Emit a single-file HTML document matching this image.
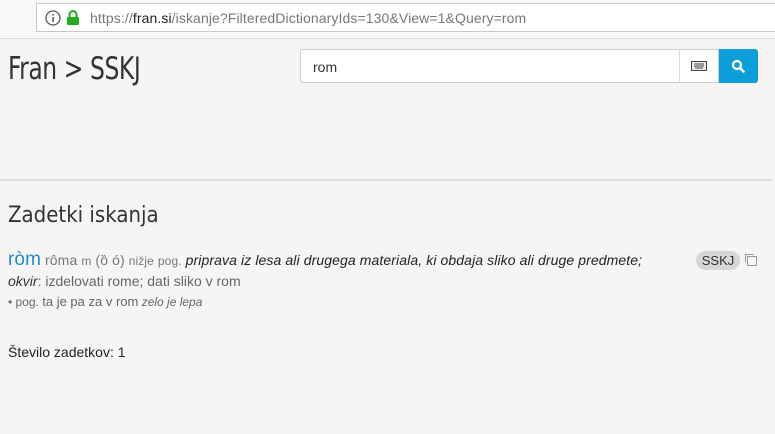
<!DOCTYPE html>
<html><head><meta charset="utf-8"><style>
body{margin:0;width:775px;height:434px;overflow:hidden;background:#f6f5f3;font-family:"Liberation Sans",sans-serif;position:relative}
.bar{position:absolute;left:0;top:0;width:775px;height:38px;background:#f9f9f9;border-bottom:1px solid #ddd}
.url{position:absolute;left:36px;top:3px;width:760px;height:29px;background:#fff;border:1px solid #c8c8c8;box-sizing:border-box}
.url span.t{position:absolute;left:53px;top:6px;font-size:14px;color:#777;letter-spacing:.1px}
.abs{position:absolute}
</style></head><body>
<div class="bar"><div class="url">
<svg class="abs" style="left:8px;top:6px" width="16" height="16"><circle cx="8" cy="8" r="7" fill="none" stroke="#555" stroke-width="1.3"/><rect x="7.3" y="7" width="1.5" height="5" fill="#555"/><rect x="7.3" y="4" width="1.5" height="1.6" fill="#555"/></svg>
<svg class="abs" style="left:29px;top:5px" width="14" height="17"><path d="M3.5 8V5.5a3.5 3.5 0 0 1 7 0V8" fill="none" stroke="#1fae1f" stroke-width="2"/><rect x="1" y="8" width="12" height="8" rx="1" fill="#1fae1f"/></svg>
<span class="t">https://<span style="color:#222">fran.si</span>/iskanje?FilteredDictionaryIds=130&amp;View=1&amp;Query=rom</span>
</div></div>
<div class="abs" style="left:8px;top:51px;font-size:31px;color:#333;font-family:'DejaVu Sans Condensed',sans-serif;font-weight:200;letter-spacing:-.5px;transform:scaleX(0.84);transform-origin:left top;white-space:nowrap">Fran &gt; SSKJ</div>
<div class="abs" style="left:300px;top:49px;width:380px;height:34px;background:#fff;border:1px solid #ccc;box-sizing:border-box;border-radius:3px 0 0 3px"><span class="abs" style="left:12px;top:9px;font-size:14px;color:#333">rom</span></div>
<div class="abs" style="left:679px;top:49px;width:40px;height:34px;background:#fff;border:1px solid #ccc;border-left:1px solid #ddd;box-sizing:border-box"><svg class="abs" style="left:11px;top:11px" width="16" height="10"><rect x=".5" y=".5" width="15" height="9" fill="#eee" stroke="#444"/><path d="M3 3h10M3 5h10M4 7h8" stroke="#444"/></svg></div>
<div class="abs" style="left:719px;top:49px;width:39px;height:34px;background:#0c9ed8;border-radius:0 3px 3px 0"><svg class="abs" style="left:12px;top:10px" width="14" height="14"><circle cx="6" cy="6" r="4" fill="none" stroke="#fff" stroke-width="2.2"/><path d="M9 9l3.5 3.5" stroke="#fff" stroke-width="2.6" stroke-linecap="round"/></svg></div>
<div class="abs" style="left:0;top:179px;width:772px;height:2px;background:#ddd"></div>
<div class="abs" style="left:8px;top:203px;font-size:22px;color:#333;font-family:'DejaVu Sans Condensed',sans-serif;font-weight:200">Zadetki iskanja</div>
<div class="abs" style="left:8px;top:249px;font-size:14px;color:#222;white-space:nowrap;letter-spacing:.1px"><span style="color:#1d8dc9;font-size:19px">ròm</span> <span style="color:#777">rôma <span style="font-size:12px">m</span> (ȍ ó) <span style="font-size:12px">nižje</span> <span style="font-size:12px">pog.</span></span> <i>priprava iz lesa ali drugega materiala, ki obdaja sliko ali druge predmete;</i></div>
<div class="abs" style="left:8px;top:273px;font-size:14px;color:#666"><i style="color:#333">okvir</i>: izdelovati rome; dati sliko v rom</div>
<div class="abs" style="left:8px;top:294px;font-size:12px;color:#666">• pog. <span style="font-size:13px">ta je pa za v rom</span> <i>zelo je lepa</i></div>
<div class="abs" style="left:8px;top:344px;font-size:14px;color:#222">Število zadetkov: 1</div>
<div class="abs" style="left:696px;top:251px;width:44px;height:19px;border-radius:10px;background:#d6d6d6;font-size:13px;color:#333;text-align:center;line-height:19px">SSKJ</div>
<svg class="abs" style="left:743px;top:252px" width="15" height="15"><rect x="4.5" y="4.5" width="9" height="9" fill="none" stroke="#999"/><path d="M2.5 10.5v-8h8" fill="none" stroke="#999"/></svg>
</body></html>
